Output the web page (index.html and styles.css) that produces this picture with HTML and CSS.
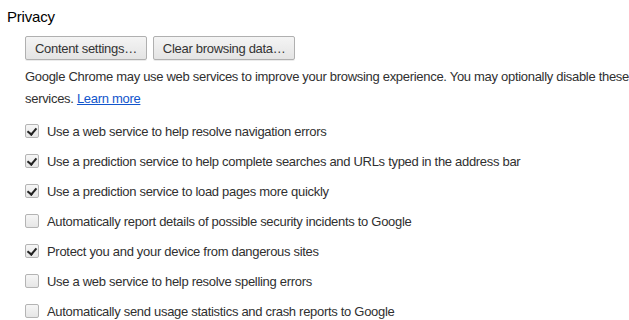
FILE: index.html
```html
<!DOCTYPE html>
<html lang="en">
<head>
    <meta charset="UTF-8">
    <title>Privacy</title>
    <link rel="stylesheet" href="styles.css">
</head>
<body>
    <section class="privacy">
        <h3>Privacy</h3>
        <div class="section-body">
            <div class="buttons">
                <button class="btn">Content settings…</button>
                <button class="btn">Clear browsing data…</button>
            </div>
            <p class="explain">Google Chrome may use web services to improve your browsing experience. You may optionally disable these services. <a href="#">Learn more</a></p>
            <ul class="options">
                <li><span class="box checked"></span>Use a web service to help resolve navigation errors</li>
                <li><span class="box checked"></span>Use a prediction service to help complete searches and URLs typed in the address bar</li>
                <li><span class="box checked"></span>Use a prediction service to load pages more quickly</li>
                <li><span class="box"></span>Automatically report details of possible security incidents to Google</li>
                <li><span class="box checked"></span>Protect you and your device from dangerous sites</li>
                <li><span class="box"></span>Use a web service to help resolve spelling errors</li>
                <li><span class="box"></span>Automatically send usage statistics and crash reports to Google</li>
            </ul>
        </div>
    </section>
</body>
</html>
```

FILE: styles.css
```css
body {
    margin: 0;
    padding: 0;
    background-color: #ffffff;
    color: #303030;
    font-family: "Liberation Sans", Arial, sans-serif;
    font-size: 13px;
    letter-spacing: -0.3px;
}

.privacy {
    padding: 8px 0 0 7px;
}

.privacy h3 {
    margin: 0;
    font-size: 15px;
    font-weight: normal;
    color: #000000;
    line-height: 18px;
    letter-spacing: -0.2px;
}

.section-body {
    padding-left: 18px;
}

.buttons {
    display: flex;
    gap: 6px;
    margin-top: 10px;
}

.btn {
    height: 24px;
    padding: 0 9px;
    border: 1px solid #b0b0b0;
    border-radius: 2px;
    background: linear-gradient(#f4f4f4, #e4e4e4);
    box-shadow: 0 1px 0 rgba(0, 0, 0, 0.08);
    color: #333333;
    font-family: inherit;
    font-size: 13px;
    letter-spacing: -0.3px;
}

.explain {
    margin: 6px 0 0 0;
    line-height: 22px;
}

.explain a {
    color: #1155cc;
}

.options {
    list-style: none;
    margin: 6px 0 0 0;
    padding: 0;
}

.options li {
    display: flex;
    align-items: center;
    height: 30px;
}

.box {
    width: 12px;
    height: 12px;
    margin-right: 8px;
    border: 1px solid #b4b4b4;
    border-radius: 2px;
    background: linear-gradient(#f6f6f6, #e6e6e6);
    position: relative;
}

.box.checked::after {
    content: "";
    position: absolute;
    left: 3px;
    top: 1px;
    width: 4px;
    height: 7px;
    border: solid #222222;
    border-width: 0 2px 2px 0;
    transform: rotate(40deg);
}
```
